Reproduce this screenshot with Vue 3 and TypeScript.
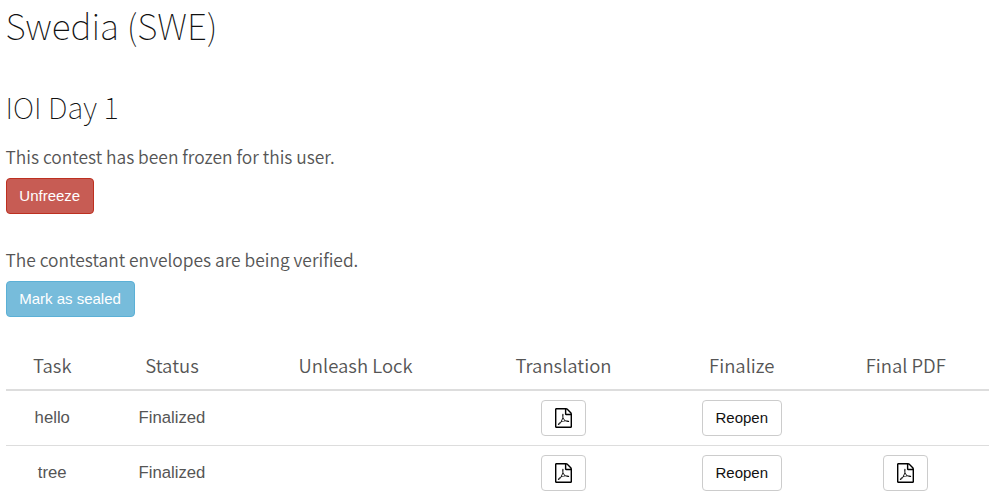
<script setup lang="ts">
interface TaskRow {
  name: string
  status: string
  finalPdf: boolean
}

const columns: string[] = ['Task', 'Status', 'Unleash Lock', 'Translation', 'Finalize', 'Final PDF']

const tasks: TaskRow[] = [
  { name: 'hello', status: 'Finalized', finalPdf: false },
  { name: 'tree', status: 'Finalized', finalPdf: true },
]

const pdfPath =
  'M1468 380q28 28 48 76t20 88v1152q0 40-28 68t-68 28h-1344q-40 0-68-28t-28-68v-1600q0-40 28-68t68-28h896q40 0 88 20t76 48zm-444-244v376h376q-10-29-22-41l-313-313q-12-12-41-22zm384 1528v-1024h-416q-40 0-68-28t-28-68v-416h-768v1536h1280zm-514-593q33 26 84 56 59-7 117-7 147 0 177 49 16 22 2 52 0 1-1 2l-2 2v1q-6 38-71 38-48 0-115-20t-130-53q-221 24-392 83-153 262-242 262-15 0-28-7l-24-12q-1-1-6-5-10-10-6-36 9-40 56-91.5t132-96.5q14-9 23 6 2 2 2 4 52-85 107-197 68-136 104-262-24-82-30.5-159.5t6.5-127.5q11-40 42-40h22q23 0 35 15 18 21 9 68-2 6-4 8 1 3 1 8v30q-2 123-14 192 55 164 146 238zm-576 411q52-24 137-158-51 40-87.5 84t-49.5 74zm398-920q-15 42-2 132 1-7 7-44 0-3 7-43 1-4 4-8-1-1-1-2-1-2-1-3-1-22-13-36 0 1-1 2v2zm-124 661q135-54 284-81-2-1-13-9.5t-16-13.5q-76-67-127-176-27 86-83 197-30 56-45 83zm646-16q-24-24-140-24 76 28 124 28 14 0 18-1 0-1-2-3z'
</script>

<template>
  <main class="page">
    <h1>Swedia (SWE)</h1>
    <h2>IOI Day 1</h2>
    <section class="block">
      <p>This contest has been frozen for this user.</p>
      <button class="btn danger">Unfreeze</button>
    </section>
    <section class="block">
      <p>The contestant envelopes are being verified.</p>
      <button class="btn info">Mark as sealed</button>
    </section>
    <div class="table">
      <div class="row head">
        <span v-for="c in columns" :key="c">{{ c }}</span>
      </div>
      <div v-for="t in tasks" :key="t.name" class="row">
        <span>{{ t.name }}</span>
        <span>{{ t.status }}</span>
        <span></span>
        <span>
          <button class="btn icon" aria-label="Translation PDF">
            <svg viewBox="0 0 1536 1792"><path :d="pdfPath" /></svg>
          </button>
        </span>
        <span><button class="btn reopen">Reopen</button></span>
        <span>
          <button v-if="t.finalPdf" class="btn icon" aria-label="Final PDF">
            <svg viewBox="0 0 1536 1792"><path :d="pdfPath" /></svg>
          </button>
        </span>
      </div>
    </div>
  </main>
</template>

<style>
html,
body {
  margin: 0;
  background: #fff;
}
</style>

<style scoped>
.page {
  box-sizing: border-box;
  width: 1000px;
  height: 504px;
  padding: 0 11px 0 5.5px;
  color: #555;
  font-family: "Noto Sans CJK SC", "Noto Sans", sans-serif;
}
h1,
h2,
p {
  margin: 0;
  white-space: nowrap;
}
h1 {
  height: 50px;
  line-height: 50px;
  font-size: 35.3px;
  font-weight: 100;
  color: #111;
}
h2 {
  height: 40px;
  margin: 36px 0 1px;
  line-height: 40px;
  font-size: 29.4px;
  font-weight: 100;
  color: #111;
}
.block {
  height: 103px;
  padding-top: 18px;
  box-sizing: border-box;
}
p {
  height: 24px;
  line-height: 24px;
  margin-bottom: 9px;
  font-size: 17.4px;
  font-weight: 350;
}
.btn {
  display: flex;
  align-items: center;
  justify-content: center;
  box-sizing: border-box;
  height: 36px;
  padding: 0;
  border: 1px solid #ccc;
  border-radius: 4px;
  background: #fff;
  color: #111;
  font: 15px/20px "Liberation Sans", Arial, sans-serif;
}
.danger {
  width: 88.5px;
  background: #c75c54;
  border-color: #bd3020;
  color: #fff;
}
.info {
  width: 129px;
  background: #77bcdb;
  border-color: #5bb0d6;
  color: #fff;
}
.table {
  width: 983.5px;
  margin-top: 10px;
}
.row {
  display: grid;
  grid-template-columns: 93.5px 146px 221px 195px 161.5px 166.5px;
  box-sizing: border-box;
  height: 55px;
  border-bottom: 1px solid #ddd;
  font: 16.7px/20px "Liberation Sans", Arial, sans-serif;
}
.row:last-child {
  height: 53px;
  border-bottom: 0;
}
.row > span {
  display: flex;
  align-items: center;
  justify-content: center;
}
.head {
  height: 48px;
  border-bottom: 2px solid #ddd;
  font: 350 18.5px/26px "Noto Sans CJK SC", "Noto Sans", sans-serif;
}
.head > span {
  padding-bottom: 2px;
}
.icon {
  width: 45px;
}
.icon svg {
  width: 17px;
  height: 20px;
  fill: #000;
}
.reopen {
  width: 80px;
}
</style>
